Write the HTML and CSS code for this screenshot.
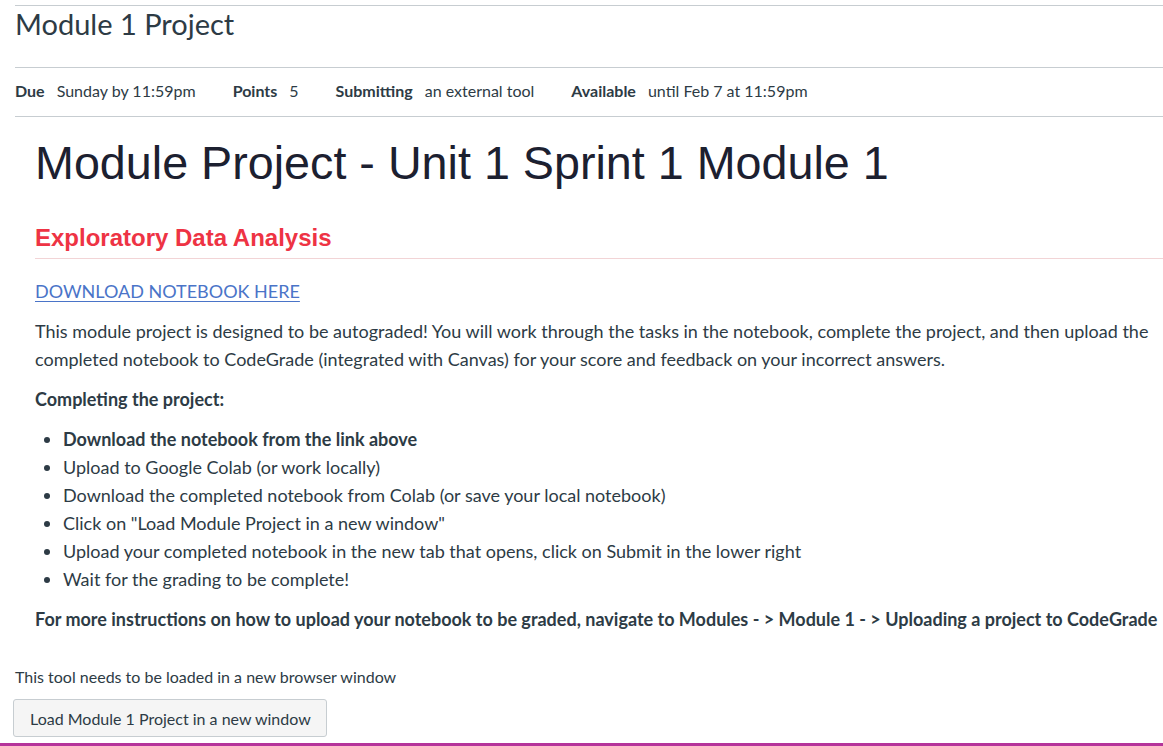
FILE: index.html
```html
<!DOCTYPE html>
<html>
<head>
<meta charset="utf-8">
<link rel="stylesheet" href="styles.css">
</head>
<body>
<div class="page">
  <header class="title-bar">
    <h1 class="title">Module 1 Project</h1>
  </header>
  <ul class="meta">
    <li><span class="label">Due</span><span class="value">Sunday by 11:59pm</span></li>
    <li><span class="label">Points</span><span class="value">5</span></li>
    <li><span class="label">Submitting</span><span class="value">an external tool</span></li>
    <li><span class="label">Available</span><span class="value">until Feb 7 at 11:59pm</span></li>
  </ul>
  <div class="content">
    <h2 class="main-heading">Module Project - Unit 1 Sprint 1 Module 1</h2>
    <h3 class="sub-heading">Exploratory Data Analysis</h3>
    <p class="link-line"><a href="#" class="dl-link">DOWNLOAD NOTEBOOK HERE</a></p>
    <p>This module project is designed to be autograded! You will work through the tasks in the notebook, complete the project, and then upload the completed notebook to CodeGrade (integrated with Canvas) for your score and feedback on your incorrect answers.</p>
    <p class="strong">Completing the project:</p>
    <ul class="steps">
      <li class="strong">Download the notebook from the link above</li>
      <li>Upload to Google Colab (or work locally)</li>
      <li>Download the completed notebook from Colab (or save your local notebook)</li>
      <li>Click on "Load Module Project in a new window"</li>
      <li>Upload your completed notebook in the new tab that opens, click on Submit in the lower right</li>
      <li>Wait for the grading to be complete!</li>
    </ul>
    <p class="strong nowrap">For more instructions on how to upload your notebook to be graded, navigate to Modules - &gt; Module 1 - &gt; Uploading a project to CodeGrade</p>
  </div>
  <div class="tool">
    <p class="tool-note">This tool needs to be loaded in a new browser window</p>
    <button class="tool-btn">Load Module 1 Project in a new window</button>
  </div>
</div>
<div class="bottom-bar"></div>
</body>
</html>
```
FILE: styles.css
```css
html, body {
  margin: 0;
  padding: 0;
  height: 100%;
  overflow: hidden;
  background: #fff;
}
body {
  font-family: Lato, "Open Sans", sans-serif;
  color: #2d3b45;
  position: relative;
}
.page {
  padding: 5px 0 0 15px;
}
.title-bar {
  border-top: 1px solid #c7cdd1;
}
.title {
  margin: 0;
  padding: 0;
  font-size: 29px;
  font-weight: 400;
  line-height: 36px;
  height: 61px;
  color: #2d3b45;
}
.meta {
  list-style: none;
  margin: 0;
  padding: 0 0 4px 0;
  display: flex;
  gap: 37px;
  height: 44px;
  align-items: center;
  border-top: 1px solid #c7cdd1;
  border-bottom: 1px solid #c7cdd1;
  font-size: 16px;
}
.meta li {
  display: flex;
  gap: 12px;
}
.label {
  font-weight: 700;
}
.content {
  padding: 0 0 0 20px;
  font-size: 18px;
  line-height: 28px;
  color: #2d3b45;
}
.main-heading {
  font-family: "Liberation Sans", Arial, sans-serif;
  font-weight: 400;
  font-size: 46.7px;
  line-height: 56px;
  margin: 18px 0 0 0;
  color: #1c2030;
}
.sub-heading {
  font-family: "Liberation Sans", Arial, sans-serif;
  font-weight: 700;
  font-size: 24px;
  line-height: 30px;
  color: #ee3344;
  margin: 32px 0 0 0;
  padding-bottom: 5px;
  border-bottom: 1px solid #f2d4d6;
}
.content p {
  margin: 12px 0 0 0;
}
.content .link-line {
  margin-top: 18px;
}
.dl-link {
  color: #4a74c8;
  text-decoration: underline;
  text-underline-offset: 3px;
  text-decoration-thickness: 1px;
}
.strong {
  font-weight: 700;
}
.steps {
  margin: 12px 0 0 0;
  padding-left: 28px;
}
.nowrap {
  white-space: nowrap;
}
.tool {
  margin-top: 34px;
}
.tool-note {
  margin: 0;
  font-size: 16px;
  line-height: 20px;
  color: #2d3b45;
}
.tool-btn {
  margin: 12px 0 0 -2px;
  font-family: Lato, sans-serif;
  font-size: 16px;
  color: #2d3b45;
  background: #f5f5f5;
  border: 1px solid #c7cdd1;
  border-radius: 3px;
  padding: 0 15px 0 16px;
  height: 38px;
}
.bottom-bar {
  position: absolute;
  left: 0;
  right: 0;
  bottom: 0;
  height: 3px;
  background: #b5339a;
}
```
